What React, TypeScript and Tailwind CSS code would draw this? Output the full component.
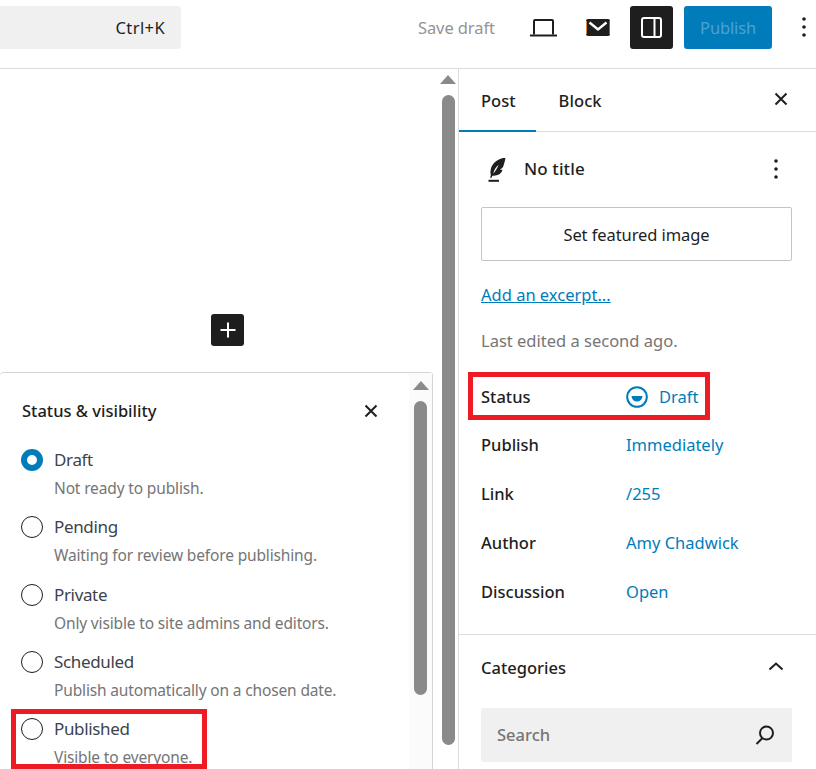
import React from "react";

const font = { fontFamily: '"Noto Sans", sans-serif' };

function Dots({ className = "" }: { className?: string }) {
  return (
    <svg width="6" height="22" viewBox="0 0 6 22" className={className}>
      <circle cx="3" cy="3" r="1.800" fill="#1e1e1e" />
      <circle cx="3" cy="11" r="1.800" fill="#1e1e1e" />
      <circle cx="3" cy="19" r="1.800" fill="#1e1e1e" />
    </svg>
  );
}

function Close() {
  return (
    <svg width="14" height="14" viewBox="0 0 14 14" fill="none" stroke="#1e1e1e" strokeWidth="2">
      <path d="M1.500 1.500 12.500 12.500M12.500 1.500 1.500 12.500" />
    </svg>
  );
}

function Radio({ on }: { on?: boolean }) {
  return on ? (
    <span className="block w-[22px] h-[22px] rounded-full border-[6px] border-[#007cba] bg-white shrink-0" />
  ) : (
    <span className="block w-[22px] h-[22px] rounded-full border border-[#1e1e1e] bg-white shrink-0" />
  );
}

function StatusOption({ label, hint, on }: { label: string; hint: string; on?: boolean }) {
  return (
    <div className="flex gap-[11px] h-[67.250px]">
      <Radio on={on} />
      <div className="flex flex-col -mt-[1px]">
        <span className="text-[17px] leading-[24px] text-[#3c434a] tracking-[-0.35px]">{label}</span>
        <span className="text-[15.500px] leading-[20px] mt-[6px] text-[#757575] tracking-[-0.15px] whitespace-nowrap">{hint}</span>
      </div>
    </div>
  );
}

function Row({ label, children }: { label: string; children: React.ReactNode }) {
  return (
    <div className="flex items-center h-[48.750px]">
      <span className="w-[145px] text-[16.500px] font-medium text-[#1e1e1e]">{label}</span>
      <span className="text-[16.500px] text-[#007cba]">{children}</span>
    </div>
  );
}

function ScrollArrow() {
  return <div className="w-0 h-0 border-x-[8px] border-x-transparent border-b-[9px] border-b-[#8a8a8a]" />;
}

export default function App() {
  return (
    <div style={font} className="w-[816px] h-[769px] overflow-hidden bg-white relative">
      {/* top bar */}
      <header className="h-[69px] border-b border-[#dcdcdc] flex items-start pt-[6px]">
        <div className="w-[181px] h-[43px] bg-[#f0f0f0] rounded-r-[4px] flex items-center justify-end pr-[16px] pt-[2px] text-[16.500px] text-[#1e1e1e] tracking-[0.4px]">
          Ctrl+K
        </div>
        <span className="ml-[237px] h-[43px] pt-[2px] flex items-center text-[16.500px] text-[#949494] tracking-[-0.1px] w-[77px] whitespace-nowrap">
          Save draft
        </span>
        <div className="ml-[35px] h-[43px] flex items-center">
          <svg width="27" height="18" viewBox="0 0 27 18" fill="none" stroke="#1e1e1e" strokeWidth="2">
            <path d="M4 15.500V2a1 1 0 0 1 1-1h17a1 1 0 0 1 1 1v13.500" />
            <path d="M0 16.500h27" />
          </svg>
        </div>
        <div className="ml-[29px] h-[43px] flex items-center">
          <svg width="24" height="17" viewBox="0 0 24 17">
            <rect x="0" y="0" width="24" height="17" rx="2" fill="#1e1e1e" />
            <path d="M0.500 2v13" stroke="#d98a3a" strokeWidth="1" />
            <path d="M23.500 2v13" stroke="#3a78b8" strokeWidth="1" />
            <path d="M3.500 3.500 12 10.500 20.500 3.500" fill="none" stroke="#fff" strokeWidth="2.400" />
          </svg>
        </div>
        <div className="ml-[20px] w-[43px] h-[43px] bg-[#1e1e1e] rounded-[3px] flex items-center justify-center">
          <svg width="21" height="21" viewBox="0 0 21 21" fill="none" stroke="#fff" strokeWidth="2">
            <rect x="1" y="1" width="19" height="19" rx="2" />
            <path d="M13.500 1v19" />
          </svg>
        </div>
        <div className="ml-[11px] w-[88px] h-[43px] pt-[2px] bg-[#007cba] rounded-[3px] flex items-center justify-center text-[16.500px] text-[#4ba3d3] tracking-[-0.15px]">
          Publish
        </div>
        <Dots className="ml-[29px] mt-[10px]" />
      </header>

      <div className="flex h-[700px]">
        {/* canvas */}
        <main className="relative w-[459px] shrink-0 border-r border-[#dcdcdc] flex">
          <div className="flex-1 flex flex-col items-center pt-[245px] pl-[17px]">
            <div className="w-[33px] h-[32px] bg-[#1e1e1e] rounded-[3px] flex items-center justify-center">
              <svg width="16" height="16" viewBox="0 0 16 16" fill="none" stroke="#fff" strokeWidth="2">
                <path d="M8 0.500v15M0.500 8h15" />
              </svg>
            </div>
          </div>
          <div className="w-[20px] shrink-0 flex flex-col items-center pt-[6px]">
            <ScrollArrow />
            <div className="mt-[11px] w-[13px] h-[650px] bg-[#8a8a8a] rounded-full" />
          </div>

          {/* popover */}
          <section className="absolute left-0 top-[303px] w-[433px] h-[420px] bg-white border-t border-r border-[#d4d4d4] rounded-tr-[4px] rounded-tl-[4px] flex">
            <div className="flex-1 pl-[21px] pt-[27px]">
              <div className="flex items-center justify-between pr-[31px] pl-[1px] h-[22px]">
                <h2 className="text-[16.500px] font-medium text-[#1e1e1e]">Status &amp; visibility</h2>
                <Close />
              </div>
              <div className="mt-[27px]">
                <StatusOption on label="Draft" hint="Not ready to publish." />
                <StatusOption label="Pending" hint="Waiting for review before publishing." />
                <StatusOption label="Private" hint="Only visible to site admins and editors." />
                <StatusOption label="Scheduled" hint="Publish automatically on a chosen date." />
                <StatusOption label="Published" hint="Visible to everyone." />
              </div>
            </div>
            <div className="w-[23px] shrink-0 bg-[#fbfbfb] flex flex-col items-center pt-[8px]">
              <ScrollArrow />
              <div className="mt-[11px] w-[13px] h-[294px] bg-[#8a8a8a] rounded-full" />
            </div>
          </section>

          <div className="absolute left-[11px] top-[640px] w-[196px] h-[60px] border-[5px] border-[#ed1c24]" />
        </main>

        {/* sidebar */}
        <aside className="relative flex-1 min-w-0 flex flex-col">
          <div className="h-[63px] pt-[2px] border-b border-[#dcdcdc] flex items-center relative shrink-0">
            <span className="ml-[22px] text-[16.500px] font-medium text-[#1e1e1e]">Post</span>
            <span className="ml-[43px] text-[16.500px] font-medium text-[#1e1e1e] tracking-[0.1px]">Block</span>
            <span className="ml-auto mr-[28px] -mt-[4px]"><Close /></span>
            <span className="absolute left-0 -bottom-px w-[77px] h-[2px] bg-[#007cba]" />
          </div>
          <div className="px-[22px] flex flex-col">
            <div className="flex items-center h-[48px] mt-[13px]">
              <svg width="18" height="25" viewBox="0 0 18 25" className="ml-[7px]">
                <path fillRule="evenodd" d="M17.500 0.500C11 1.500 4.500 5 2.800 12c-.5 2.200-.5 4.500 0 6.700l-.8 2h1.600l.8-2c3 .2 6.500-.5 8.600-3 .8-1 1.300-2 1.500-3-.9.100-1.700 0-2.500-.3 1.600-.7 3-1.800 3.500-3.600.7-2.800 1.800-5.500 1.999-8.300ZM5.200 16.800c.8-3.600 2.500-6.500 5.500-9-1.300 3-2.800 5.800-5.500 9Z" fill="#1e1e1e" />
                <path d="M0.500 23.800h10.500" stroke="#1e1e1e" strokeWidth="2" />
              </svg>
              <span className="ml-[18px] text-[17px] font-medium text-[#1e1e1e] tracking-[0.1px]">No title</span>
              <Dots className="ml-auto mr-[15px]" />
            </div>
            <button className="mt-[14px] pt-[2px] w-[311px] h-[54px] border border-[#c4c4c4] rounded-[2px] text-[16.500px] text-[#1e1e1e] tracking-[-0.08px]">
              Set featured image
            </button>
            <a className="mt-[22px] h-[24px] leading-[24px] text-[16.500px] text-[#007cba] underline">Add an excerpt...</a>
            <p className="mt-[22px] h-[24px] leading-[24px] text-[16.500px] text-[#757575]">Last edited a second ago.</p>
            <div className="mt-[19.500px]">
              <Row label="Status">
                <span className="flex items-center gap-[11px]">
                  <svg width="22" height="22" viewBox="0 0 22 22">
                    <circle cx="11" cy="11" r="9.800" fill="none" stroke="#007cba" strokeWidth="2" />
                    <path d="M5.500 10h11a5.500 5.500 0 0 1-11 0Z" fill="#007cba" />
                  </svg>
                  Draft
                </span>
              </Row>
              <Row label="Publish">Immediately</Row>
              <Row label="Link">/255</Row>
              <Row label="Author">Amy Chadwick</Row>
              <Row label="Discussion">Open</Row>
            </div>
          </div>
          <div className="mt-[17.500px] border-t border-[#dcdcdc] px-[22px]">
            <div className="h-[67px] flex items-center justify-between">
              <span className="text-[16.500px] font-medium text-[#1e1e1e]">Categories</span>
              <svg width="16" height="10" viewBox="0 0 16 10" fill="none" stroke="#1e1e1e" strokeWidth="2" className="mr-[10px] -mt-[5px]">
                <path d="M1.500 8.500 8 2.500l6.500 6" />
              </svg>
            </div>
            <div className="mt-[6px] w-[311px] h-[54px] bg-[#f0f0f0] rounded-[2px] flex items-center justify-between pl-[16px] pr-[17px]">
              <span className="pt-[2px] text-[16.500px] font-medium text-[#757575]">Search</span>
              <svg width="20" height="20" viewBox="0 0 20 20" fill="none" stroke="#1e1e1e" strokeWidth="2">
                <circle cx="11.500" cy="8" r="6.500" />
                <path d="M7.500 13 1.500 19" />
              </svg>
            </div>
          </div>
          <div className="absolute left-[9px] top-[303px] w-[242px] h-[48px] border-[5px] border-[#ed1c24]" />
        </aside>
      </div>
    </div>
  );
}
